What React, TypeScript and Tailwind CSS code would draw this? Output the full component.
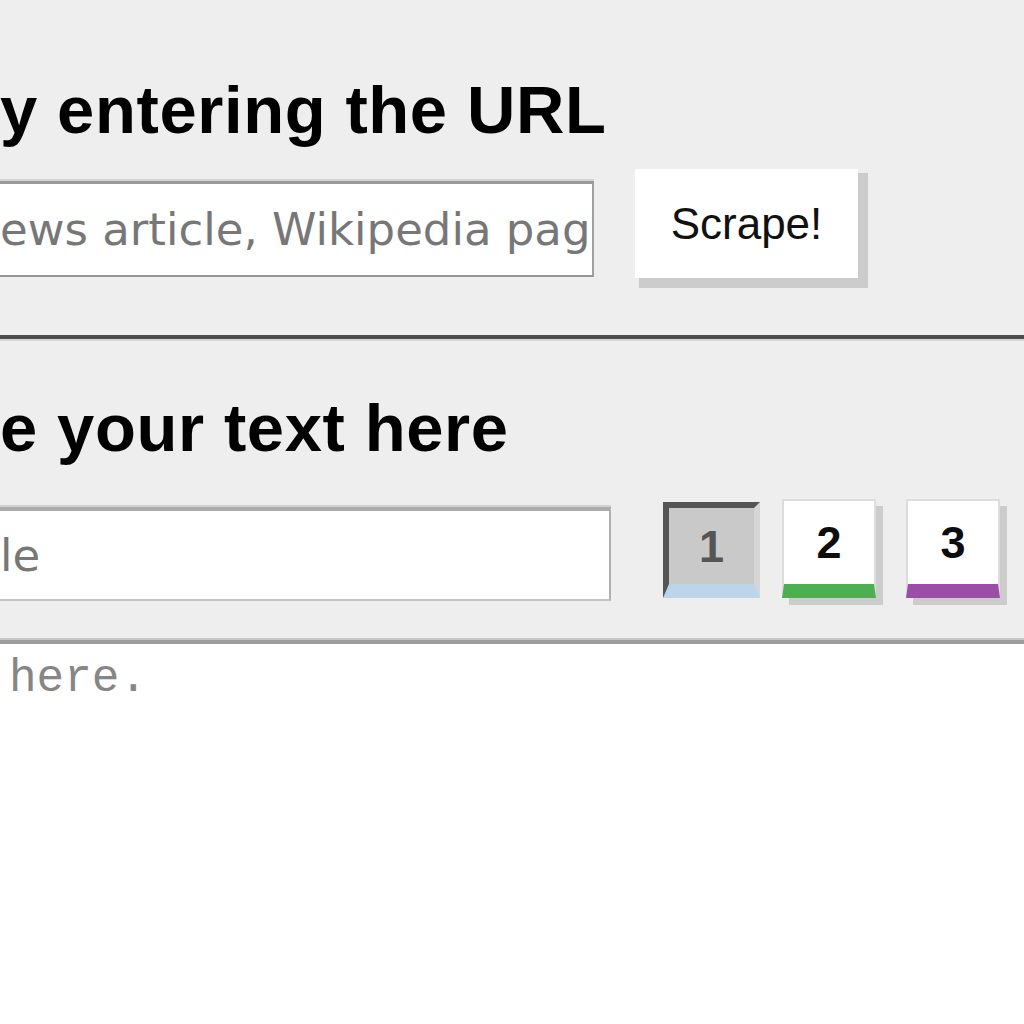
const heading = "font-['Liberation_Sans',Arial,sans-serif] text-[67px] leading-[66px] tracking-[0.6px] font-bold text-black whitespace-nowrap";
const field = "font-['DejaVu_Sans',Verdana,sans-serif] text-[45px] text-[#222] placeholder:text-[#777] bg-white outline-none pl-0";

function TabButton({ n, active, strip }: { n: string; active?: boolean; strip: string }) {
  if (active) {
    return (
      <button
        className={`mt-[3px] w-[97px] h-[96px] flex items-center justify-center bg-[#c9c9c9] border-t-[6px] border-l-[6px] border-r-[6px] border-b-[14px] border-t-[#555] border-l-[#555] border-r-[#d6d6d6] ${strip} font-['Liberation_Sans',Arial,sans-serif] font-bold text-[45px] leading-none text-[#555]`}
      >
        {n}
      </button>
    );
  }
  return (
    <button
      className={`w-[94px] h-[99px] flex items-center justify-center bg-white border-2 border-b-[14px] border-[#dddddd] ${strip} shadow-[7px_7px_0_#cccccc] font-['Liberation_Sans',Arial,sans-serif] font-bold text-[45px] leading-none text-[#0d0d0d]`}
    >
      {n}
    </button>
  );
}

export default function App() {
  return (
    <div className="w-[1024px] h-[1024px] overflow-hidden bg-[#eeeeee] flex flex-col">
      {/* scrape by url */}
      <section className="pt-[77px] pb-[57px]">
        <h2 className={heading}>y entering the URL</h2>
        <div className="mt-[26px] flex items-start">
          <input
            className={`${field} mt-[12px] w-[594px] h-[96px] border-t-[3px] border-t-[#9a9a9a] border-r-2 border-b-2 border-r-[#a0a0a0] border-b-[#959595] shadow-[0_-2px_0_#d4d4d4]`}
            placeholder="ews article, Wikipedia page"
          />
          <button className="ml-[41px] w-[223px] h-[109px] bg-white shadow-[7px_7px_0_3px_#cccccc] font-['Liberation_Sans',Arial,sans-serif] text-[44px] leading-none text-[#111]">
            Scrape!
          </button>
        </div>
      </section>

      <div className="h-[4px] bg-[#4c4c4c]" />
      <div className="h-[2px] bg-[#d6d6d6]" />

      {/* paste text */}
      <section className="pt-[54px] pb-[37px]">
        <h2 className={heading}>e your text here</h2>
        <div className="mt-[38px] flex items-start">
          <input
            className={`${field} mt-[8px] w-[611px] h-[94px] border-t-[4px] border-t-[#ababab] border-r-2 border-b-2 border-r-[#b0b0b0] border-b-[#c4c4c4] shadow-[0_-2px_0_#d2d2d2]`}
            placeholder="le"
          />
          <div className="ml-[52px] flex items-start">
            <TabButton n="1" active strip="border-b-[#bcd5ea]" />
            <div className="ml-[22px]">
              <TabButton n="2" strip="border-b-[#4caf50]" />
            </div>
            <div className="ml-[30px]">
              <TabButton n="3" strip="border-b-[#9b4ea8]" />
            </div>
          </div>
        </div>
      </section>

      <div className="h-[2px] bg-[#c8c8c8]" />
      <div className="h-[4px] bg-[#9d9d9d]" />

      <textarea
        className="flex-1 resize-none bg-white outline-none pt-[12px] pl-[9px] font-['Liberation_Mono','Courier_New',monospace] text-[46px] leading-[46px] text-[#333] placeholder:text-[#868686]"
        placeholder="here."
      />
    </div>
  );
}
